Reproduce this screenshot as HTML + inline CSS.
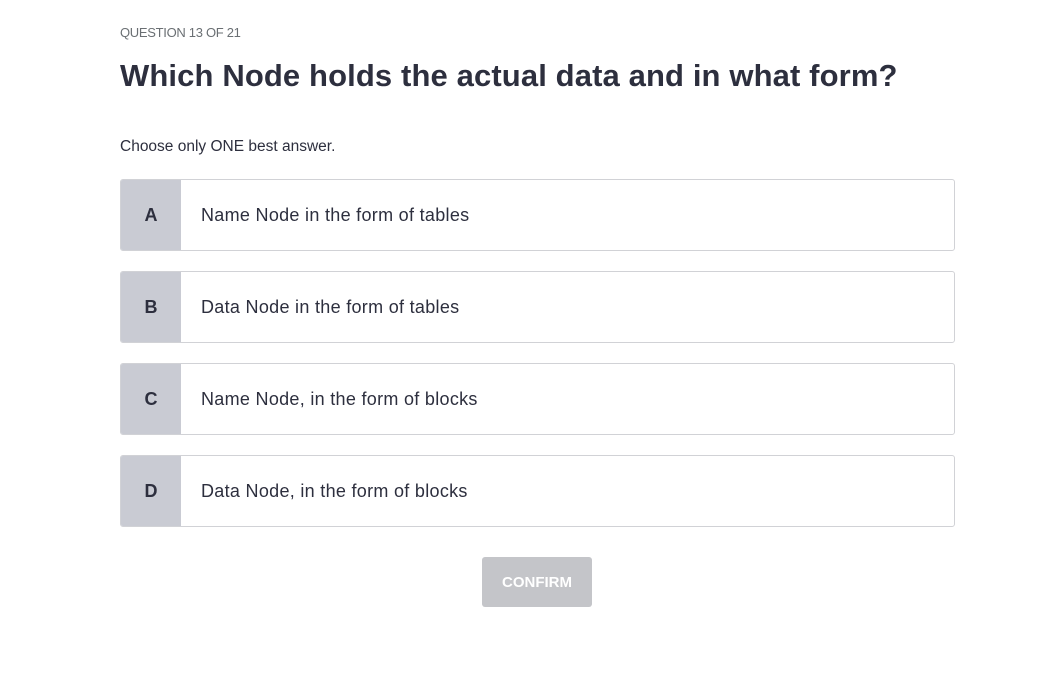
<!DOCTYPE html>
<html><head><style>
body{margin:0;background:#fff;font-family:"Liberation Sans",sans-serif;color:#2d2f3e;width:1042px;height:687px;overflow:hidden}
.q{position:absolute;left:120px;top:25px;font-size:13px;color:#6a6f73;letter-spacing:-0.3px}
h1{position:absolute;left:120px;top:58px;margin:0;font-size:31px;font-weight:bold;letter-spacing:0.12px;white-space:nowrap;color:#2d2f3e}
.c{position:absolute;left:120px;top:138px;font-size:15.5px;letter-spacing:0px}
.opt{position:absolute;left:120px;width:835px;height:70px;border:1px solid #d1d2d6;border-radius:3px;display:flex;align-items:center;box-sizing:border-box;overflow:hidden}
.l{width:60px;height:100%;background:#c9cbd3;display:flex;align-items:center;justify-content:center;font-weight:bold;font-size:18px}
.t{margin-left:20px;font-size:18px;letter-spacing:0.3px;padding-top:1px}
.btn{position:absolute;left:482px;top:557px;width:110px;height:50px;background:#c4c5c9;border-radius:3px;color:#fff;font-weight:bold;font-size:15px;display:flex;align-items:center;justify-content:center}
</style></head><body>
<div class="q">QUESTION 13 OF 21</div>
<h1>Which Node holds the actual data and in what form?</h1>
<div class="c">Choose only ONE best answer.</div>
<div class="opt" style="top:179px;height:72px"><div class="l">A</div><div class="t">Name Node in the form of tables</div></div>
<div class="opt" style="top:271px;height:72px"><div class="l">B</div><div class="t">Data Node in the form of tables</div></div>
<div class="opt" style="top:363px;height:72px"><div class="l">C</div><div class="t">Name Node, in the form of blocks</div></div>
<div class="opt" style="top:455px;height:72px"><div class="l">D</div><div class="t">Data Node, in the form of blocks</div></div>
<div class="btn">CONFIRM</div>
</body></html>
